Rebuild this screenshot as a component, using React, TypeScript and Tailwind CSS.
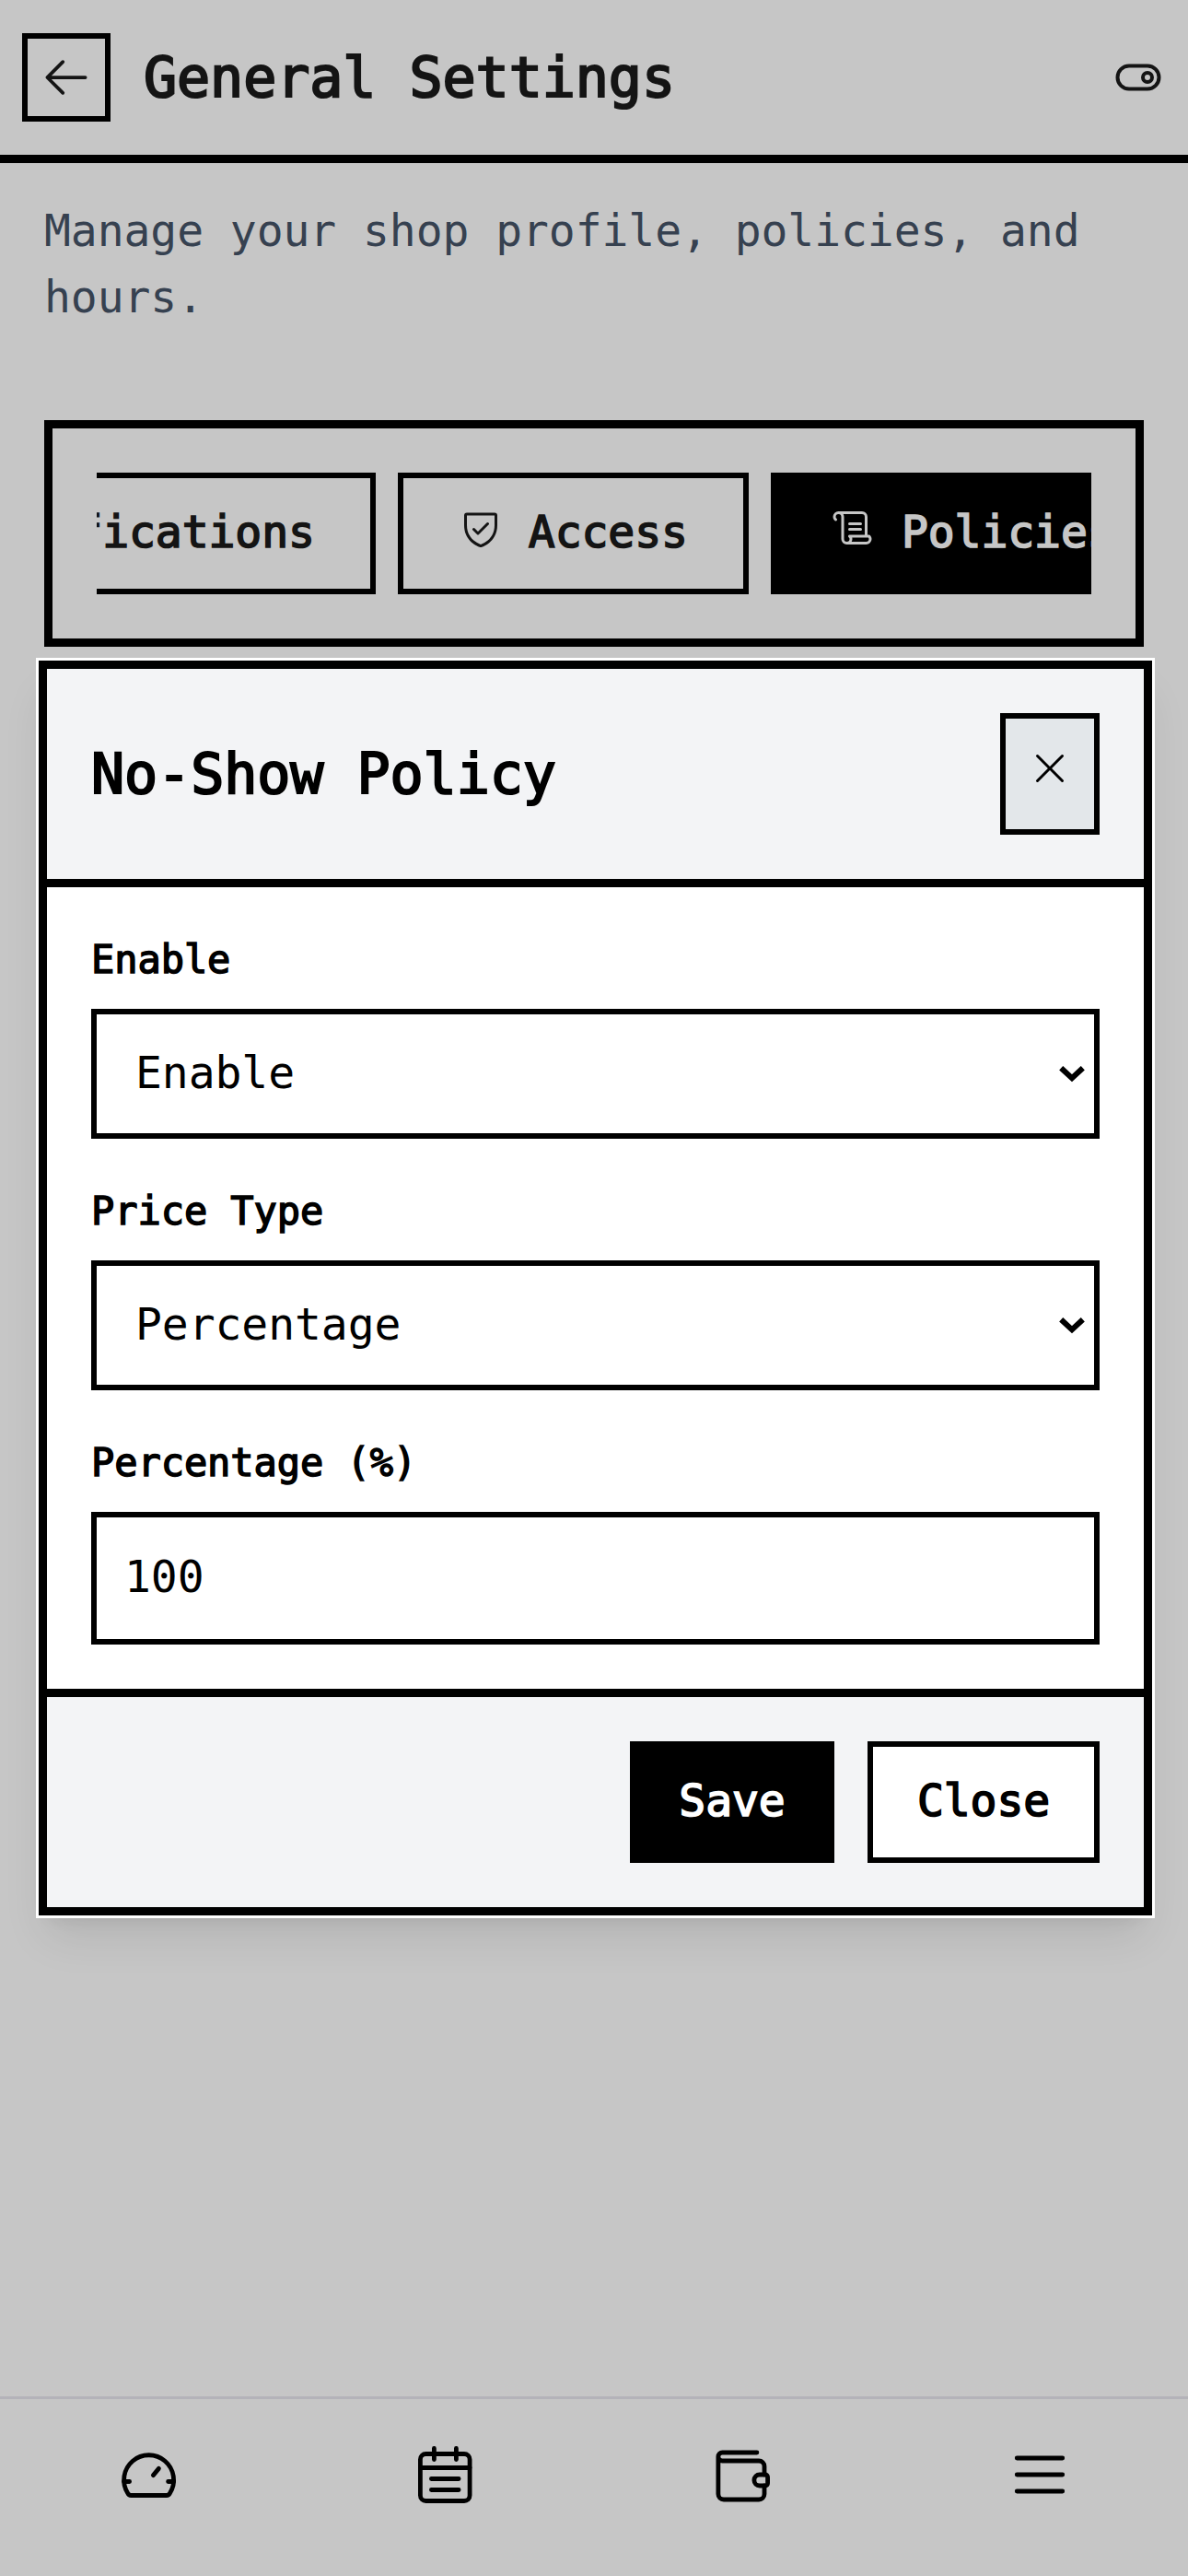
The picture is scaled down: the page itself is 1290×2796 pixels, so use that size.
import type { ReactNode } from "react";
import { PiArrowLeft, PiBell, PiScroll, PiShieldCheck, PiX } from "react-icons/pi";

const strokeProps = {
    viewBox: "0 0 24 24",
    fill: "none",
    stroke: "currentColor",
    strokeWidth: 1.6,
    strokeLinecap: "round" as const,
    strokeLinejoin: "round" as const,
};

function ToggleIcon() {
    return (
        <svg {...strokeProps} className="size-[60px]">
            <rect x="3" y="7" width="18" height="10" rx="5" />
            <circle cx="16" cy="12" r="2" />
        </svg>
    );
}

function GaugeIcon() {
    return (
        <svg {...strokeProps} className="size-[72px]">
            <path d="M5.8 19.5h12.8c.6 0 1-.3 1.25-.85A9 9 0 1 0 4.55 18.65c.25.55.65.85 1.25.85Z" />
            <path d="M3.2 14.5h2M19.2 14.5h2M13.8 12.2l2-2.4" />
        </svg>
    );
}

function CalendarIcon() {
    return (
        <svg {...strokeProps} className="size-[72px]">
            <rect x="2.8" y="4.5" width="17.9" height="17" rx="2" />
            <path d="M7.8 2.5v4M15.8 2.5v4M2.8 9.5h17.9M6.8 13.5h9.9M6.8 17.5h9.9" />
        </svg>
    );
}

function WalletIcon() {
    return (
        <svg {...strokeProps} className="size-[72px]">
            <path d="M17.3 4H4.8a1.5 1.5 0 0 0 0 3H18a2 2 0 0 1 2 2v3M3.3 5.5V19a2 2 0 0 0 2 2H18a2 2 0 0 0 2-2v-3" />
            <path d="M18.3 12h2c.5 0 .9.4.9.9v2.2c0 .5-.4.9-.9.9h-2a2 2 0 0 1 0-4Z" />
        </svg>
    );
}

function MenuIcon() {
    return (
        <svg {...strokeProps} className="size-[72px]">
            <path d="M3.75 6h16.5M3.75 12h16.5M3.75 18h16.5" />
        </svg>
    );
}

const tabs = [
    { name: "Notifications", icon: PiBell, active: false },
    { name: "Access", icon: PiShieldCheck, active: false },
    { name: "Policies", icon: PiScroll, active: true },
];

const navItems = [
    { name: "dashboard", icon: GaugeIcon },
    { name: "calendar", icon: CalendarIcon },
    { name: "wallet", icon: WalletIcon },
    { name: "menu", icon: MenuIcon },
];

function Field({ label, children }: { label: string; children: ReactNode }) {
    return (
        <div>
            <div className="mb-[23px] pt-px text-[42px] leading-[60px] [-webkit-text-stroke:1.5px_currentColor]">{label}</div>
            {children}
        </div>
    );
}

function SelectBox({ value }: { value: string }) {
    return (
        <div className="flex h-[141px] items-center justify-between border-6 border-black pl-[42px] pr-2.5">
            <span className="pb-[3px] text-5xl leading-[72px]">{value}</span>
            <svg viewBox="0 0 28 18" className="h-[18px] w-7 overflow-visible" fill="none" stroke="currentColor" strokeWidth="6">
                <path d="M2.2 2.2 14 13.2 25.8 2.2" />
            </svg>
        </div>
    );
}

export default function App() {
    return (
        <div className="relative flex h-[2796px] w-[1290px] flex-col overflow-hidden bg-[#c6c6c6] font-['DejaVu_Sans_Mono','Liberation_Mono',monospace] tracking-[-0.004em] text-[#141414]">
            <header className="flex h-[177px] items-center border-b-9 border-black px-6">
                <button className="flex size-24 items-center justify-center border-6 border-black">
                    <PiArrowLeft className="size-[60px]" />
                </button>
                <h1 className="ml-9 flex-1 text-[60px] leading-[84px] [-webkit-text-stroke:2.2px_currentColor]">General Settings</h1>
                <ToggleIcon />
            </header>

            <main className="flex-1 px-12 pt-[37px]">
                <p className="text-5xl leading-[72px] text-[#364150]">Manage your shop profile, policies, and hours.</p>

                <div className="mt-[98px] border-9 border-black p-12">
                    <div className="overflow-hidden">
                        <div className="-ml-[280px] flex w-max gap-6">
                            {tabs.map((tab) => (
                                <button
                                    key={tab.name}
                                    className={
                                        tab.active
                                            ? "flex h-[132px] items-center border-6 border-black bg-black px-15 pb-1 text-[#c6c6c6]"
                                            : "flex h-[132px] items-center border-6 border-black px-15 pb-1"
                                    }
                                >
                                    <tab.icon className="mb-2 size-12" />
                                    <span className="ml-7 text-5xl leading-[72px] [-webkit-text-stroke:1.7px_currentColor]">{tab.name}</span>
                                </button>
                            ))}
                        </div>
                    </div>
                </div>
            </main>

            <nav className="grid h-[195px] grid-cols-4 border-t-3 border-[#b4b3b9] pt-[46px] text-black">
                {navItems.map((item) => (
                    <div key={item.name} className="flex justify-center">
                        <item.icon />
                    </div>
                ))}
            </nav>

            {/* No-show policy dialog */}
            <div className="absolute inset-x-0 top-[717px] pl-[42px] pr-[39px] text-black">
                <section className="border-9 border-black bg-white shadow-[0_0_0_3px_#fff,0_30px_45px_-9px_rgba(0,0,0,0.1),0_12px_18px_-12px_rgba(0,0,0,0.1)]">
                    <div className="flex items-center justify-between border-b-9 border-black bg-gray-100 p-12">
                        <h2 className="text-[60px] leading-[84px] [-webkit-text-stroke:2.2px_currentColor]">No-Show Policy</h2>
                        <button className="flex h-[132px] w-[108px] items-center justify-center border-6 border-black bg-[#e3e7ea]">
                            <PiX className="mb-3 size-12" />
                        </button>
                    </div>

                    <div className="space-y-12 p-12">
                        <Field label="Enable">
                            <SelectBox value="Enable" />
                        </Field>
                        <Field label="Price Type">
                            <SelectBox value="Percentage" />
                        </Field>
                        <Field label="Percentage (%)">
                            <div className="flex h-36 items-center border-6 border-black px-[30px] pb-1 text-5xl leading-[72px]">100</div>
                        </Field>
                    </div>

                    <div className="flex justify-end gap-9 border-t-9 border-black bg-gray-100 p-12">
                        <button className="h-[132px] w-[222px] border-6 border-black bg-black pb-1 text-5xl leading-[72px] text-white [-webkit-text-stroke:1.7px_currentColor]">
                            Save
                        </button>
                        <button className="h-[132px] w-[252px] border-6 border-black bg-white pb-1 text-5xl leading-[72px] [-webkit-text-stroke:1.7px_currentColor]">
                            Close
                        </button>
                    </div>
                </section>
            </div>
        </div>
    );
}
